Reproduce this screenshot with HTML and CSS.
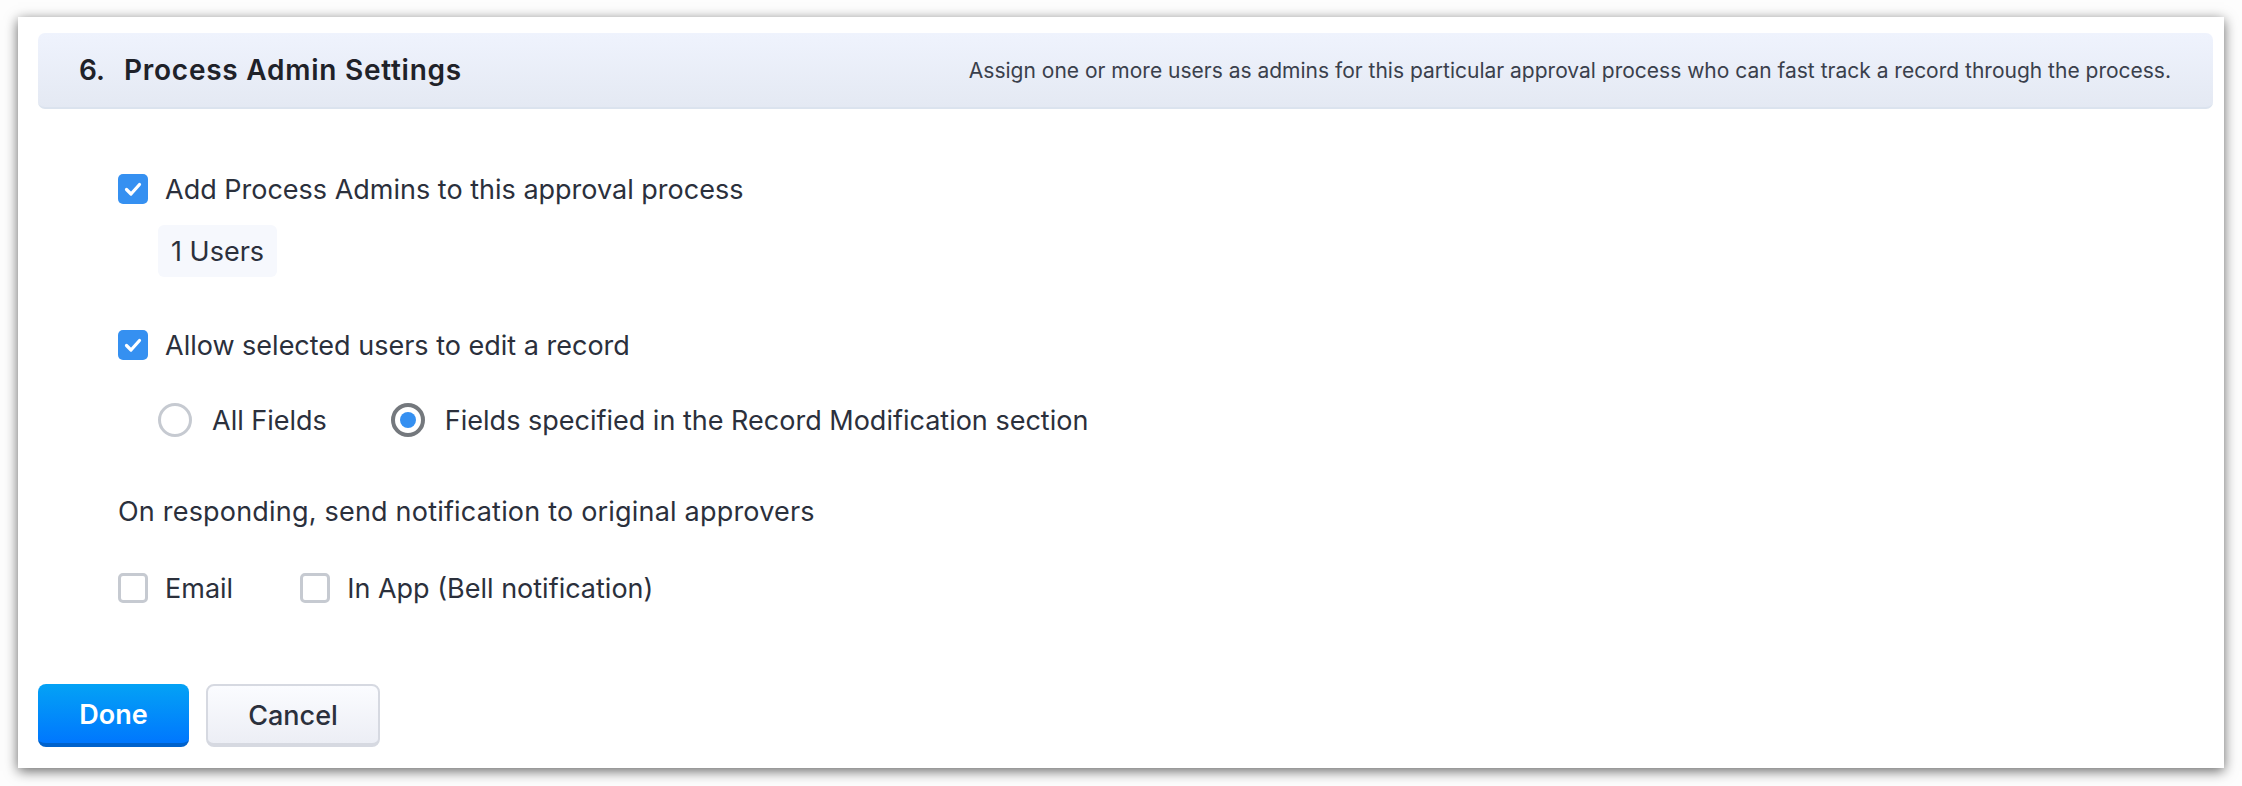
FILE: index.html
```html
<!DOCTYPE html>
<html lang="en">
<head>
<meta charset="utf-8">
<title>Process Admin Settings</title>
<link rel="stylesheet" href="styles.css">
</head>
<body>
<div class="card">
  <div class="header">
    <h2 class="title"><span class="num">6.</span>Process Admin Settings</h2>
    <p class="desc">Assign one or more users as admins for this particular approval process who can fast track a record through the process.</p>
  </div>
  <div class="body">
    <div class="row row-first">
      <span class="cb cb-on"><svg viewBox="0 0 30 30" width="30" height="30"><path d="M8.5 15.5 L13 20 L21.5 10.5" fill="none" stroke="#fff" stroke-width="3.2" stroke-linecap="round" stroke-linejoin="round"/></svg></span>
      <span class="label">Add Process Admins to this approval process</span>
    </div>
    <div class="users">1 Users</div>
    <div class="row row-second">
      <span class="cb cb-on"><svg viewBox="0 0 30 30" width="30" height="30"><path d="M8.5 15.5 L13 20 L21.5 10.5" fill="none" stroke="#fff" stroke-width="3.2" stroke-linecap="round" stroke-linejoin="round"/></svg></span>
      <span class="label">Allow selected users to edit a record</span>
    </div>
    <div class="radios">
      <span class="radio"></span>
      <span class="label rlabel-1">All Fields</span>
      <span class="radio radio-on"><span class="dot"></span></span>
      <span class="label">Fields specified in the Record Modification section</span>
    </div>
    <div class="note">On responding, send notification to original approvers</div>
    <div class="row row-notify">
      <span class="cb"></span>
      <span class="label nlabel-1">Email</span>
      <span class="cb"></span>
      <span class="label">In App (Bell notification)</span>
    </div>
  </div>
  <div class="actions">
    <button class="btn btn-primary">Done</button>
    <button class="btn btn-secondary">Cancel</button>
  </div>
</div>
</body>
</html>
```
FILE: styles.css
```css
* { box-sizing: border-box; }
html, body { margin: 0; padding: 0; }
body {
  background: #fdfdfd;
  font-family: Inter, "Noto Sans", sans-serif;
  color: #2b303c;
  width: 2242px;
  height: 786px;
  overflow: hidden;
}
.card {
  margin: 17px 18px 0 18px;
  height: 751px;
  background: #fff;
  box-shadow: 0 3px 12px rgba(0,0,0,0.6);
  padding: 16px 11px 0 20px;
  display: flex;
  flex-direction: column;
}
.header {
  height: 76px;
  border-radius: 7px;
  background: linear-gradient(#eff3fd, #e4e9f3);
  border-bottom: 2px solid #dbe3ee;
  display: flex;
  align-items: center;
  justify-content: space-between;
  padding: 0 42px 0 41px;
}
.title {
  margin: 0;
  font-size: 28px;
  font-weight: 600;
  color: #1f2229;
  letter-spacing: 0.75px;
}
.num { display: inline-block; width: 45px; letter-spacing: 0; }
.desc {
  margin: 0;
  font-size: 21px;
  color: #3a404c;
}
.body {
  padding-left: 80px;
  display: flex;
  flex-direction: column;
  align-items: flex-start;
}
.row { display: flex; align-items: center; height: 30px; }
.row-first { margin-top: 65px; }
.row-second { margin-top: 53px; }
.row-notify { margin-top: 46px; }
.label { font-size: 27px; line-height: 30px; padding-top: 2px; color: #2b303c; }
.cb {
  width: 30px;
  height: 30px;
  border-radius: 5px;
  border: 3px solid #c6cad1;
  background: #fff;
  margin-right: 17px;
  flex: none;
}
.cb-on {
  border: none;
  background: #3590f1;
}
.cb-on svg { display: block; }
.users {
  margin-top: 21px;
  margin-left: 40px;
  height: 52px;
  padding: 2px 13px 0;
  background: #f6f8fd;
  border-radius: 6px;
  font-size: 27px;
  line-height: 50px;
}
.radios {
  margin-top: 43px;
  margin-left: 40px;
  display: flex;
  align-items: center;
  height: 34px;
}
.radio {
  width: 34px;
  height: 34px;
  border-radius: 50%;
  border: 3px solid #c6cad1;
  margin-right: 20px;
  flex: none;
  display: flex;
  align-items: center;
  justify-content: center;
}
.radio-on { border: 4px solid #74787d; }
.dot { width: 16px; height: 16px; border-radius: 50%; background: #3590f1; }
.rlabel-1 { margin-right: 64px; }
.nlabel-1 { margin-right: 67px; }
.note {
  margin-top: 60px;
  font-size: 27px;
  line-height: 30px;
  letter-spacing: 0.2px;
}
.actions {
  margin-top: 81px;
  display: flex;
  gap: 17px;
}
.btn {
  height: 63px;
  border-radius: 8px;
  font-family: Inter, "Noto Sans", sans-serif;
  font-size: 27px;
  padding: 2px 0 0;
}
.btn-primary {
  width: 151px;
  border: none;
  border-bottom: 4px solid #0062cc;
  background: linear-gradient(#04a2f5, #0077fe);
  color: #fff;
  font-weight: 600;
}
.btn-secondary {
  width: 174px;
  border: 2px solid #d6d9e1;
  border-bottom-width: 4px;
  background: linear-gradient(#fbfcff, #eceef5);
  color: #2b303c;
  font-weight: 500;
}
```
